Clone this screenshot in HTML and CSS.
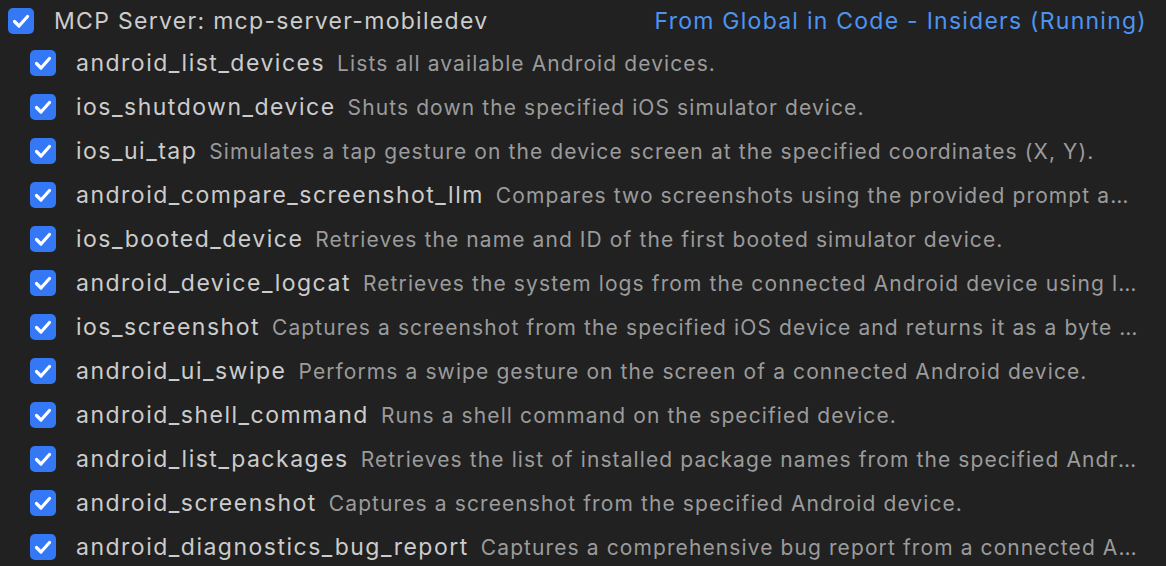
FILE: index.html
```html
<!DOCTYPE html>
<html>
<head>
<meta charset="utf-8">
<link rel="stylesheet" href="styles.css">
</head>
<body>
<div class="panel">
  <div class="server-row">
    <span class="cb"><svg viewBox="0 0 26 26"><path d="M6.5 13.5 L11 18 L19.5 8.5"/></svg></span>
    <span class="server-name">MCP Server: mcp-server-mobiledev</span>
    <span class="server-src">From Global in Code - Insiders (Running)</span>
  </div>
  <div class="tool-row"><span class="cb"><svg viewBox="0 0 26 26"><path d="M6.5 13.5 L11 18 L19.5 8.5"/></svg></span><span class="tool-name">android_list_devices</span><span class="tool-desc">Lists all available Android devices.</span></div>
  <div class="tool-row"><span class="cb"><svg viewBox="0 0 26 26"><path d="M6.5 13.5 L11 18 L19.5 8.5"/></svg></span><span class="tool-name">ios_shutdown_device</span><span class="tool-desc">Shuts down the specified iOS simulator device.</span></div>
  <div class="tool-row"><span class="cb"><svg viewBox="0 0 26 26"><path d="M6.5 13.5 L11 18 L19.5 8.5"/></svg></span><span class="tool-name">ios_ui_tap</span><span class="tool-desc">Simulates a tap gesture on the device screen at the specified coordinates (X, Y).</span></div>
  <div class="tool-row"><span class="cb"><svg viewBox="0 0 26 26"><path d="M6.5 13.5 L11 18 L19.5 8.5"/></svg></span><span class="tool-name">android_compare_screenshot_llm</span><span class="tool-desc">Compares two screenshots using the provided prompt and returns the analysis result.</span></div>
  <div class="tool-row"><span class="cb"><svg viewBox="0 0 26 26"><path d="M6.5 13.5 L11 18 L19.5 8.5"/></svg></span><span class="tool-name">ios_booted_device</span><span class="tool-desc">Retrieves the name and ID of the first booted simulator device.</span></div>
  <div class="tool-row"><span class="cb"><svg viewBox="0 0 26 26"><path d="M6.5 13.5 L11 18 L19.5 8.5"/></svg></span><span class="tool-name">android_device_logcat</span><span class="tool-desc">Retrieves the system logs from the connected Android device using logcat.</span></div>
  <div class="tool-row"><span class="cb"><svg viewBox="0 0 26 26"><path d="M6.5 13.5 L11 18 L19.5 8.5"/></svg></span><span class="tool-name">ios_screenshot</span><span class="tool-desc">Captures a screenshot from the specified iOS device and returns it as a byte array.</span></div>
  <div class="tool-row"><span class="cb"><svg viewBox="0 0 26 26"><path d="M6.5 13.5 L11 18 L19.5 8.5"/></svg></span><span class="tool-name">android_ui_swipe</span><span class="tool-desc">Performs a swipe gesture on the screen of a connected Android device.</span></div>
  <div class="tool-row"><span class="cb"><svg viewBox="0 0 26 26"><path d="M6.5 13.5 L11 18 L19.5 8.5"/></svg></span><span class="tool-name">android_shell_command</span><span class="tool-desc">Runs a shell command on the specified device.</span></div>
  <div class="tool-row"><span class="cb"><svg viewBox="0 0 26 26"><path d="M6.5 13.5 L11 18 L19.5 8.5"/></svg></span><span class="tool-name">android_list_packages</span><span class="tool-desc">Retrieves the list of installed package names from the specified Android device.</span></div>
  <div class="tool-row"><span class="cb"><svg viewBox="0 0 26 26"><path d="M6.5 13.5 L11 18 L19.5 8.5"/></svg></span><span class="tool-name">android_screenshot</span><span class="tool-desc">Captures a screenshot from the specified Android device.</span></div>
  <div class="tool-row"><span class="cb"><svg viewBox="0 0 26 26"><path d="M6.5 13.5 L11 18 L19.5 8.5"/></svg></span><span class="tool-name">android_diagnostics_bug_report</span><span class="tool-desc">Captures a comprehensive bug report from a connected Android device.</span></div>
</div>
</body>
</html>
```
FILE: styles.css
```css
html, body {
  margin: 0;
  padding: 0;
  background: #212121;
}
body {
  font-family: Inter, "Noto Sans", sans-serif;
  width: 1166px;
  height: 566px;
  overflow: hidden;
}
.panel {
  display: flex;
  flex-direction: column;
  padding-right: 26px;
}
.server-row {
  display: flex;
  align-items: center;
  height: 42px;
  padding-left: 8px;
}
.tool-row {
  display: flex;
  align-items: center;
  height: 44px;
  padding-left: 30px;
  min-width: 0;
}
.server-row + .tool-row {
  margin-top: -1px;
}
.cb {
  flex: 0 0 26px;
  width: 26px;
  height: 26px;
  border-radius: 5px;
  background: #3478f6;
  display: flex;
  align-items: center;
  justify-content: center;
  margin-right: 20px;
}
.cb svg {
  width: 26px;
  height: 26px;
  fill: none;
  stroke: #ffffff;
  stroke-width: 3.2;
  stroke-linecap: round;
  stroke-linejoin: round;
}
.server-name {
  font-size: 23px;
  letter-spacing: 1.3px;
  color: #cccccc;
  white-space: nowrap;
}
.server-src {
  margin-left: auto;
  font-size: 23px;
  letter-spacing: 1.25px;
  color: #4d94f2;
  white-space: nowrap;
  margin-right: -7px;
}
.tool-name {
  font-size: 23px;
  letter-spacing: 1.5px;
  color: #cccccc;
  white-space: nowrap;
  flex: 0 0 auto;
}
.tool-desc {
  font-size: 21px;
  letter-spacing: 1.1px;
  color: #9b9b9b;
  white-space: nowrap;
  overflow: hidden;
  text-overflow: ellipsis;
  margin-left: 12px;
  min-width: 0;
}
```
